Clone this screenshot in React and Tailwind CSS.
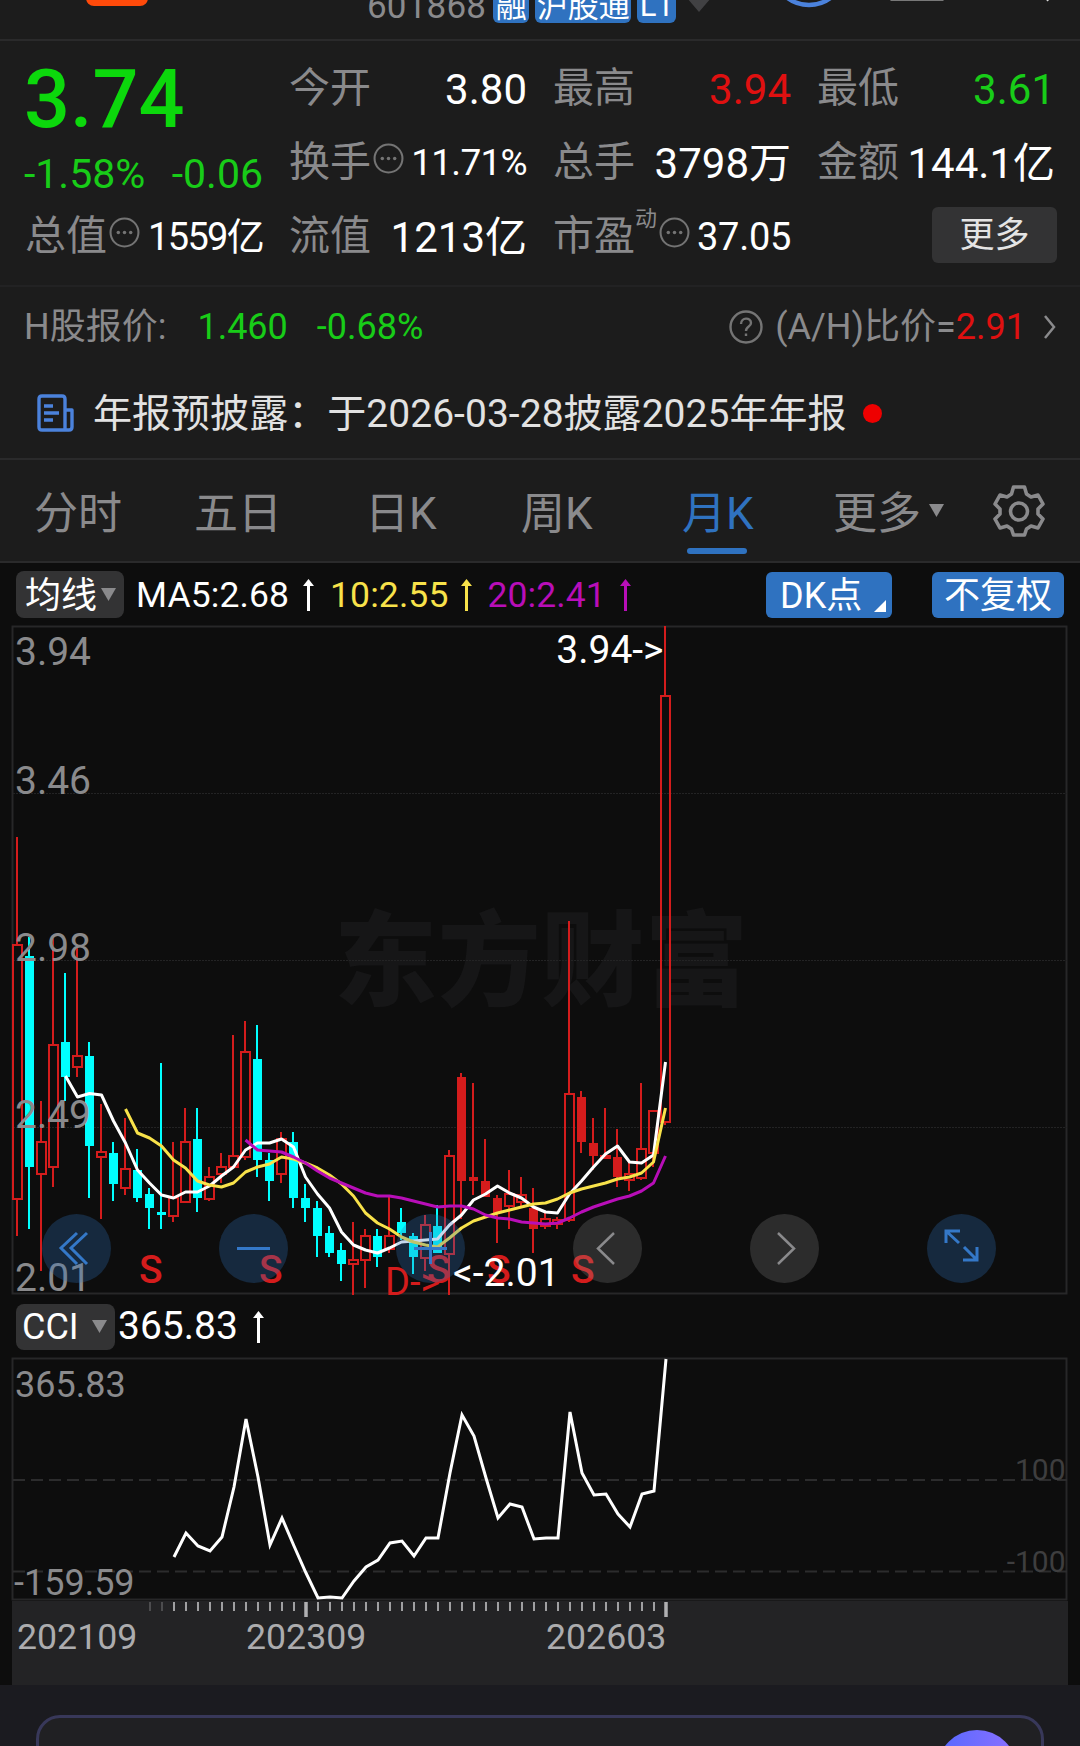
import React from "react";

const font = { fontFamily: 'Roboto, "Noto Sans CJK SC", sans-serif' };

// [kind, high, body top, body bottom, low] in chart pixels; r hollow, R solid red, c cyan
const candles = [
  ["r", 837, 945, 1199, 1236], ["c", 937, 956, 1167, 1229], ["r", 1101, 1142, 1174, 1271],
  ["r", 937, 1045, 1167, 1187], ["c", 973, 1042, 1077, 1101], ["r", 945, 1056, 1067, 1077],
  ["c", 1042, 1056, 1146, 1198], ["r", 1104, 1152, 1157, 1219], ["c", 1142, 1153, 1184, 1201],
  ["r", 1118, 1169, 1188, 1195], ["c", 1149, 1170, 1198, 1202], ["c", 1188, 1194, 1208, 1229],
  ["c", 1063, 1212, 1215, 1229], ["r", 1142, 1198, 1216, 1222], ["r", 1108, 1142, 1202, 1202],
  ["c", 1108, 1139, 1198, 1212], ["r", 1167, 1177, 1199, 1201], ["r", 1153, 1167, 1174, 1183],
  ["r", 1035, 1156, 1167, 1167], ["r", 1021, 1052, 1157, 1160], ["c", 1025, 1059, 1160, 1177],
  ["c", 1153, 1160, 1181, 1201], ["r", 1132, 1139, 1174, 1183], ["c", 1132, 1142, 1198, 1208],
  ["c", 1184, 1198, 1208, 1222], ["c", 1201, 1208, 1236, 1257], ["c", 1226, 1233, 1253, 1257],
  ["c", 1243, 1250, 1264, 1281], ["r", 1222, 1260, 1264, 1295], ["r", 1229, 1236, 1260, 1288],
  ["c", 1229, 1236, 1257, 1267], ["r", 1196, 1236, 1249, 1253], ["c", 1208, 1222, 1233, 1240],
  ["c", 1233, 1236, 1257, 1274], ["r", 1215, 1225, 1258, 1271], ["c", 1205, 1226, 1253, 1253],
  ["r", 1150, 1156, 1254, 1295], ["R", 1073, 1077, 1181, 1219], ["R", 1083, 1177, 1181, 1195],
  ["R", 1139, 1181, 1197, 1197], ["R", 1195, 1198, 1213, 1243], ["r", 1170, 1194, 1206, 1229],
  ["r", 1177, 1195, 1202, 1206], ["R", 1188, 1208, 1229, 1253], ["r", 1213, 1219, 1226, 1229],
  ["r", 1217, 1220, 1224, 1229], ["r", 921, 1094, 1220, 1222], ["R", 1091, 1097, 1142, 1153],
  ["R", 1118, 1143, 1156, 1170], ["r", 1108, 1156, 1158, 1159], ["R", 1129, 1157, 1177, 1187],
  ["r", 1163, 1174, 1180, 1191], ["r", 1083, 1149, 1178, 1180], ["r", 1111, 1111, 1153, 1167],
  ["r", 626, 696, 1122, 1125],
];

const xAt = (i) => 17.5 + i * 12;
const line = (start, ys) => ys.map((y, i) => `${xAt(start + i)},${y}`).join(" ");

const ma5 = line(4, [1076, 1097, 1093.5, 1095, 1121, 1143, 1170, 1183, 1195, 1198, 1192, 1192, 1186, 1176, 1167, 1150, 1143, 1143, 1139, 1147, 1177, 1194, 1208, 1232, 1245, 1250, 1253, 1248, 1242, 1241, 1240, 1239, 1225, 1215, 1200, 1194, 1186, 1193, 1198, 1207, 1212, 1213, 1194, 1181, 1167, 1154, 1146, 1162, 1163, 1155, 1062]);
const ma10 = line(9, [1109, 1133, 1138, 1146, 1160, 1168, 1181, 1185, 1187, 1183, 1172, 1167, 1164, 1157, 1159, 1163, 1168, 1175, 1184, 1196, 1213, 1223, 1229, 1237, 1242, 1245, 1247, 1238, 1228, 1221, 1217, 1213, 1210, 1207, 1204, 1203, 1199, 1193, 1189, 1186, 1183, 1179, 1177, 1173, 1162, 1108]);
const ma20 = line(19, [1140, 1150, 1151, 1152, 1157, 1163, 1171, 1178, 1183, 1188, 1193, 1196, 1196, 1198, 1201, 1204, 1207, 1206, 1206, 1209, 1215, 1218, 1219, 1222, 1223, 1224, 1223, 1218, 1212, 1207, 1203, 1199, 1196, 1191, 1183, 1156]);
const cci = line(13, [1557, 1533, 1546, 1551, 1537, 1487, 1419, 1477, 1545, 1518, 1546, 1573, 1598, 1597, 1598, 1581, 1567, 1560, 1543, 1541, 1556, 1538, 1538, 1473, 1415, 1436, 1478, 1518, 1504, 1507, 1539, 1538, 1538, 1412, 1473, 1495, 1494, 1514, 1527, 1494, 1491, 1359]).replace(/([\d.]+),/g, (_, x) => `${Number(x) + 0.5},`);

const Dots = () => (
  <svg className="block h-[31px] w-[31px] shrink-0 text-[#747474]" viewBox="0 0 30 30" fill="none" stroke="currentColor" strokeWidth="2">
    <circle cx="15" cy="15" r="13.5" />
    <g fill="currentColor" stroke="none"><circle cx="9" cy="15" r="1.7" /><circle cx="15" cy="15" r="1.7" /><circle cx="21" cy="15" r="1.7" /></g>
  </svg>
);

const Up = ({ className }) => (
  <svg className={className} width="13" height="34" viewBox="0 0 13 34" fill="none" stroke="currentColor" strokeWidth="3">
    <path d="M6.5 5V33" /><path d="M6.5 1L12 8H1Z" fill="currentColor" stroke="none" />
  </svg>
);

const Cell = ({ label, value, className = "text-white", size = "text-[42px]", icon, sup }) => (
  <div className="flex h-[52px] items-center justify-between whitespace-nowrap">
    <div className="flex items-center pl-px text-[41px] text-[#8a8a8c]">
      {label}
      {sup && <span className="mb-[38px] text-[22px]">{sup}</span>}
      {icon && <span className="ml-[2px] -translate-y-[5px]"><Dots /></span>}
    </div>
    <span className={`${size} ${className}`}>{value}</span>
  </div>
);

const Header = () => (
  <header className="flex h-[41px] items-end overflow-hidden border-b-2 border-[#2a2a2b]">
    <div className="ml-[86px] h-[41px] w-[62px] shrink-0">
      <div className="h-[8px] rounded-b-xl bg-[#ff4a0a]" />
    </div>
    <div className="ml-[219px] flex h-[41px] shrink-0 items-start">
      <div className="-mt-4 flex h-[41px] items-center gap-[6px] text-[31px] leading-none">
        <span className="mr-[1px] pt-[8px] text-[35px] tracking-[0.2px] text-[#8a8a8c]">601868</span>
        <span className="flex h-[41px] w-[36px] items-center justify-center rounded-md bg-[#2f72c0] pt-[8px] text-white">融</span>
        <span className="flex h-[41px] w-[96px] items-center justify-center rounded-md bg-[#2f72c0] pt-[8px] text-white">沪股通</span>
        <span className="flex h-[41px] w-[39px] items-center justify-center rounded-md bg-[#2f72c0] pt-[6px] text-white">L1</span>
      </div>
      <svg className="ml-[11px]" width="24" height="16" viewBox="0 0 24 16"><path d="M0 0H24L12 14Z" fill="#414143" /></svg>
      <svg className="ml-[72px]" width="330" height="16" viewBox="0 0 330 16" fill="none">
        <circle cx="26" cy="-29" r="36" stroke="#4b82dc" strokeWidth="4.500" />
        <rect x="106" y="-5" width="56" height="7.500" rx="3" fill="#d4d4d4" />
        <path d="M260 -4L266 2" stroke="#ddd" strokeWidth="4" />
      </svg>
    </div>
  </header>
);

const QuoteGrid = () => (
  <section className="flex h-[246px] gap-[25px] border-b-2 border-[#222223] pt-[22px] pl-[24px]">
    <div className="flex w-[239px] flex-col">
      <div className="-mt-px h-[76px] text-[81px] leading-[76px] font-medium text-[#0cd80c]">3.74</div>
      <div className="mt-[15px] flex h-[44px] items-center justify-between text-[41px] text-[#18cc18]"><span>-1.58%</span><span>-0.06</span></div>
      <div className="mt-[14px]"><Cell label="总值" icon size="text-[38px] tracking-[-1.700px]" value="1559亿" /></div>
    </div>
    <div className="flex w-[239px] flex-col gap-[22px]">
      <Cell label="今开" value="3.80" /><Cell label="换手" icon size="text-[37px] tracking-[-0.700px]" value="11.71%" /><Cell label="流值" value="1213亿" />
    </div>
    <div className="flex w-[239px] flex-col gap-[22px]">
      <Cell label="最高" value="3.94" className="text-[#e01010]" /><Cell label="总手" value="3798万" /><Cell label="市盈" sup="动" icon size="text-[38px] tracking-[-0.300px]" value="37.05" />
    </div>
    <div className="flex w-[239px] flex-col gap-[22px]">
      <Cell label="最低" value="3.61" className="text-[#18cc18]" /><Cell label="金额" value="144.1亿" />
      <div className="-mt-[4px] flex h-[56px] w-[125px] translate-x-[2px] items-center justify-center self-end rounded-md bg-[#333334] pt-[2px] text-[35px] text-[#e4e4e4]">更多</div>
    </div>
  </section>
);

const HShare = () => (
  <section className="flex h-[78px] items-center px-[24px] pt-[2px] text-[36px] whitespace-nowrap text-[#8a8a8c]">
    <span>H股报价:</span>
    <span className="ml-[31px] text-[#18cc18]">1.460</span>
    <span className="ml-[29px] text-[#18cc18]">-0.68%</span>
    <svg className="ml-auto" width="34" height="34" viewBox="0 0 34 34" fill="none" stroke="#747474" strokeWidth="2.4">
      <circle cx="17" cy="17" r="15.5" /><path d="M12 14C12 7 22 7 22 13C22 17 17 16 17 21" /><path d="M17 23.5V26" />
    </svg>
    <span className="ml-[12px]">(A/H)比价=</span><span className="text-[#e01010]">2.91</span>
    <svg className="ml-[18px]" width="12" height="26" viewBox="0 0 12 26" fill="none" stroke="#8a8a8c" strokeWidth="2.5"><path d="M1 2L10 13L1 24" /></svg>
  </section>
);

const Notice = () => (
  <section className="flex h-[95px] items-center border-b-2 border-[#2a2a2b] pt-[3px] pl-[37px] text-[39px] whitespace-nowrap text-[#e2e2e2]">
    <svg width="37" height="38" viewBox="0 0 37 38" fill="none" stroke="#4b82dc" strokeWidth="3.4" strokeLinejoin="round">
      <path d="M28 36H5Q2 36 2 33V5Q2 2 5 2H25Q28 2 28 5V36H32Q35 36 35 33V16H28M7 12H16M7 19H22M7 26H16" />
    </svg>
    <span className="ml-[19px] pt-[2px] tracking-[0.040px]">年报预披露：于2026-03-28披露2025年年报</span>
    <span className="ml-[16px] h-[19px] w-[19px] rounded-full bg-[#ee0000]" />
  </section>
);

const Tabs = () => (
  <nav className="flex h-[103px] items-center border-b-2 border-[#2a2a2b] pl-[34px] text-[44px] whitespace-nowrap text-[#8a8a8c]">
    <span className="w-[160px] pt-[6px]">分时</span><span className="w-[171px] pt-[6px]">五日</span><span className="w-[156px] pt-[6px]">日K</span><span className="w-[161px] pt-[6px]">周K</span>
    <span className="relative w-[151px] pt-[6px] text-[#2f72c0]">月K<i className="absolute -bottom-[7px] left-[5px] h-[6px] w-[60px] rounded-full bg-[#2f72c0]" /></span>
    <span className="pt-[6px]">更多</span>
    <svg className="ml-[8px]" width="16" height="14" viewBox="0 0 16 14"><path d="M0 0H15L7.5 13Z" fill="#8a8a8c" /></svg>
    <svg className="ml-[48px]" width="52" height="52" viewBox="0 0 52 52" fill="none" stroke="#8a8a8c" strokeWidth="3.6" strokeLinejoin="round">
      <path d="M20.500 2H31.500L33.500 9L38 12L45 10L50 19L45 24V29L50 34L45 43L38 41L33.500 44L31.500 50H20.500L18.500 44L14 41L7 43L2 34L7 29V24L2 19L7 10L14 12L18.500 9Z" /><circle cx="26" cy="26.500" r="8.500" />
    </svg>
  </nav>
);

const Label = ({ x, y, children, fill = "#8a8a8c", size = 36, anchor = "start", ...rest }) => (
  <text x={x} y={y} fill={fill} fontSize={size} textAnchor={anchor} {...rest}>{children}</text>
);

const KChart = () => (
  <svg className="block shrink-0" width="1080" height="672" viewBox="0 624 1080 672" style={font}>
    <rect x="12.5" y="626.5" width="1054" height="667" fill="none" stroke="#272728" strokeWidth="2" />
    <Label x="334" y="998" size="103" fill="#161617" fontWeight="900" textLength="414">东方财富</Label>
    <g stroke="#232324" strokeWidth="1" strokeDasharray="2 1"><path d="M13 793.5H1067M13 960.5H1067M13 1127.5H1067" /></g>
    {candles.map(([k, h, t, b, l], i) => {
      const x = xAt(i);
      const c = k === "c" ? "#00ffff" : "#d41c1c";
      return (
        <g key={i} stroke={c} strokeWidth="2">
          <path d={`M${x - 0.5} ${h}V${t}M${x - 0.5} ${b}V${l}`} />
          {k === "r"
            ? <rect x={x - 4.5} y={t} width="9" height={Math.max(b - t, 1)} fill="none" />
            : <rect x={x - 4.5} y={t} width="9" height={b - t} fill={c} stroke="none" />}
        </g>
      );
    })}
    <g fill="none" strokeWidth="3" strokeLinejoin="round">
      <polyline points={ma5} stroke="#fff" /><polyline points={ma10} stroke="#f8e24a" /><polyline points={ma20} stroke="#b80eb8" />
    </g>
    <Label x="15" y="665" size="39">3.94</Label><Label x="15" y="794" size="39">3.46</Label><Label x="15" y="961" size="39">2.98</Label><Label x="15" y="1128" size="39">2.49</Label><Label x="15" y="1291" size="39">2.01</Label>
    <Label x="663.5" y="663" size="39" fill="#fff" anchor="end">{"3.94->"}</Label>
    <g fontWeight="500">{[139, 259, 427, 487, 571].map((x) => <Label key={x} x={x} y="1283" size="39" fill="#d41c1c">S</Label>)}</g>
    <Label x="385" y="1295" size="38" fill="#d41c1c">{"D->"}</Label>
    <Label x="453" y="1286" size="39" fill="#fff">{"<-2.01"}</Label>
    <g fill="#2f72c0" fillOpacity="0.28">{[76.5, 253.5, 430.5, 961.5].map((x) => <circle key={x} cx={x} cy="1248.500" r="34.5" />)}</g>
    <g fill="#8a8a8c" fillOpacity="0.25">{[607.5, 784.5].map((x) => <circle key={x} cx={x} cy="1248.500" r="34.5" />)}</g>
    <g fill="none" stroke="#3478c8" strokeWidth="3">
      <path d="M77 1233L61 1248L77 1264M87 1233L71 1248L87 1264M237 1248.500H270M414 1248.500H447M430.500 1232V1264" />
      <path d="M946 1243V1231H960M946 1231L959 1243M963 1260H977V1247M977 1260L964 1247" />
    </g>
    <path d="M614 1233L598 1248.500L614 1264M778 1233L794 1248.500L778 1264" fill="none" stroke="#8a8a8c" strokeWidth="2.5" />
  </svg>
);

const CciChart = () => (
  <svg className="block shrink-0" width="1080" height="328" viewBox="0 1357 1080 328" style={font}>
    <rect x="12" y="1601" width="1056" height="84" fill="#232325" />
    <rect x="12.5" y="1358.500" width="1054" height="241" fill="none" stroke="#272728" strokeWidth="2" />
    <path d="M13 1480H1067M13 1571.500H1067" stroke="#2c2c2d" strokeWidth="2" strokeDasharray="12 6" />
    <Label x="1065.5" y="1480" size="30" fill="#3e3e3f" anchor="end">100</Label><Label x="1065.5" y="1572" size="30" fill="#3e3e3f" anchor="end">-100</Label>
    <Label x="15" y="1397">365.83</Label><Label x="14" y="1595">-159.59</Label>
    <polyline points={cci} fill="none" stroke="#fff" strokeWidth="3" />
    {Array.from({ length: 43 }, (_, i) => i + 12).filter((i) => i !== 25).map((i) => <path key={i} d={`M${xAt(i) - 11.5} 1602V1611`} stroke={i < 14 ? "#4c4c4e" : "#a0a0a2"} strokeWidth="2" />)}
    <path d="M306 1602V1617M666 1602V1617" stroke="#b0b0b2" strokeWidth="3.500" />
    <Label x="17" y="1649" size="35.7" fill="#acacae">202109</Label><Label x="246" y="1649" size="35.7" fill="#acacae">202309</Label><Label x="546" y="1649" size="35.7" fill="#acacae">202603</Label>
  </svg>
);

const Tri = ({ className }) => <svg className={className} width="15" height="13" viewBox="0 0 15 13"><path d="M0 0H15L7.500 13Z" fill="#8a8a8c" /></svg>;

export default function App() {
  return (
    <main className="flex h-[1746px] w-[1080px] flex-col overflow-hidden bg-[#0d0d0d]" style={font}>
      <div className="bg-[#1c1c1c]"><Header /><QuoteGrid /><HShare /><Notice /><Tabs /></div>
      <div className="flex h-[61px] shrink-0 items-center pt-[2px] pl-[16px] text-[35.5px] whitespace-nowrap text-white">
        <span className="flex h-[47px] w-[108px] items-center rounded-lg bg-[#333334] pt-[3px] pl-[9px] text-[36px]">均线<Tri className="mb-[3px] ml-[4px]" /></span>
        <span className="ml-[12px] pt-[2px] tracking-[0.1px]">MA5:2.68</span><Up className="ml-[13px]" />
        <span className="ml-[15px] flex items-center pt-[2px] tracking-[0.1px] text-[#f8e24a]">10:2.55<Up className="-mt-[2px] ml-[12px]" /></span>
        <span className="ml-[14px] flex items-center pt-[2px] tracking-[0.1px] text-[#b80eb8]">20:2.41<Up className="-mt-[2px] ml-[13px]" /></span>
        <span className="relative ml-auto flex h-[46px] w-[126px] items-center rounded-md bg-[#2f72c0] pt-[3px] pl-[14px] text-[36px]">DK点<svg className="absolute right-[6px] bottom-[6px]" width="12" height="12"><path d="M12 0V12H0Z" fill="#fff" /></svg></span>
        <span className="mr-[16px] ml-[40px] flex h-[46px] w-[132px] items-center justify-center rounded-md bg-[#2f72c0] pt-[3px] text-[36px]">不复权</span>
      </div>
      <KChart />
      <div className="flex h-[61px] shrink-0 items-center pl-[16px] text-[36px] text-white">
        <span className="flex h-[46px] w-[99px] items-center rounded-lg bg-[#333334] pl-[6px]">CCI<Tri className="ml-[13px]" /></span>
        <span className="ml-[3px] text-[39px]">365.83</span><Up className="ml-[14px]" />
      </div>
      <CciChart />
      <footer className="h-[61px] bg-[#1b1b20] px-[36px] pt-[30px]">
        <div className="flex h-[80px] justify-end rounded-[24px] border-[3px] border-[#38385a] bg-[#202023] pt-[12px] pr-[24px]">
          <span className="h-[80px] w-[80px] rounded-full bg-linear-to-r from-[#5468ff] to-[#8a70ff]" />
        </div>
      </footer>
    </main>
  );
}
